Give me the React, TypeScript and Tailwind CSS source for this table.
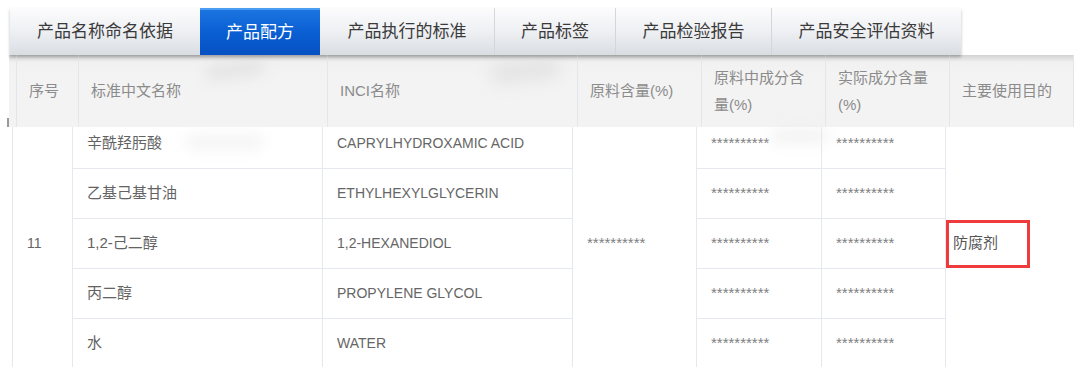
import React from "react";

const FONT = '"Liberation Sans", "Noto Sans CJK SC", Arial, sans-serif';

const tabs = [
  { label: "产品名称命名依据", w: "w-[190px]" },
  { label: "产品配方", w: "w-[120px]", active: true },
  { label: "产品执行的标准", w: "w-[174px]" },
  { label: "产品标签", w: "w-[121px]" },
  { label: "产品检验报告", w: "w-[156px]" },
  { label: "产品安全评估资料", w: "w-[190px]" },
];

const rows = [
  { cn: "辛酰羟肟酸", inci: "CAPRYLHYDROXAMIC ACID" },
  { cn: "乙基己基甘油", inci: "ETHYLHEXYLGLYCERIN" },
  { cn: "1,2-己二醇", inci: "1,2-HEXANEDIOL" },
  { cn: "丙二醇", inci: "PROPYLENE GLYCOL" },
  { cn: "水", inci: "WATER" },
];

const MASK = "**********";

function TabBar() {
  return (
    <div className="ml-[10px] mt-[8px] flex h-[47px] w-[951px] bg-gradient-to-b from-[#fcfcfd] via-[#eef0f3] to-[#d9dde2] shadow-[0_2px_3px_rgba(0,0,0,0.25)] relative z-10">
      {tabs.map((t, i) =>
        t.active ? (
          <div
            key={t.label}
            className={`${t.w} flex items-center justify-center text-[17px] text-white bg-gradient-to-b from-[#1b74e0] via-[#0a5fd3] to-[#0650c2] border-t-2 border-[#4a9cf0]`}
          >
            {t.label}
          </div>
        ) : (
          <div
            key={t.label}
            className={`${t.w} flex items-center justify-center text-[17px] text-[#3a3a3a] ${
              i > 0 && !tabs[i - 1].active ? "border-l border-[#d3d7dd]" : ""
            }`}
          >
            {t.label}
          </div>
        )
      )}
    </div>
  );
}

function HeaderRow() {
  const cell = "h-full border-l border-[#e4e6ee] pl-[12px] flex items-center text-[15px] text-[#8b8b8b]";
  return (
    <div className="ml-[9px] flex h-[72px] w-[1065px] bg-gradient-to-b from-[#d2d2d2] via-[#f1f1f1] to-[#f3f3f3] to-30% via-10%">
      <div className="w-[7px]" />
      <div className={`${cell} w-[62px]`}>序号</div>
      <div className={`${cell} w-[249px]`}>标准中文名称</div>
      <div className={`${cell} w-[250px]`}>INCI名称</div>
      <div className={`${cell} w-[124px]`}>原料含量(%)</div>
      <div className={`${cell} w-[124px] leading-[27px]`}>
        <span>
          原料中成分含
          <br />
          量(%)
        </span>
      </div>
      <div className={`${cell} w-[124px] leading-[27px]`}>
        <span>
          实际成分含量
          <br />
          (%)
        </span>
      </div>
      <div className={`${cell} w-[125px] border-r`}>主要使用目的</div>
    </div>
  );
}

function BodyTable() {
  const td = "border border-[#e6e8f0] pl-[14px] align-middle";
  const cnText = "text-[15px] text-[#636363]";
  const enText = "text-[14px] text-[#666666]";
  const star = "text-[15px] text-[#808080]";
  return (
    <div className="ml-[12px] h-[240px] w-[1058px] overflow-hidden">
      <table className="-mt-[9px] w-[1058px] table-fixed border-collapse">
        <colgroup>
          <col className="w-[60px]" />
          <col className="w-[250px]" />
          <col className="w-[250px]" />
          <col className="w-[124px]" />
          <col className="w-[125px]" />
          <col className="w-[124px]" />
          <col className="w-[125px]" />
        </colgroup>
        <tbody>
          {rows.map((r, i) => (
            <tr key={r.inci} className="h-[50px]">
              {i === 0 && (
                <td rowSpan={5} className={`${td} ${enText}`}>
                  11
                </td>
              )}
              <td className={`${td} ${cnText}`}>{r.cn}</td>
              <td className={`${td} ${enText}`}>{r.inci}</td>
              {i === 0 && (
                <td rowSpan={5} className={`${td} ${star}`}>
                  {MASK}
                </td>
              )}
              <td className={`${td} ${star}`}>{MASK}</td>
              <td className={`${td} ${star}`}>{MASK}</td>
              {i === 0 && (
                <td rowSpan={5} className="border border-[#e6e8f0] align-middle">
                  <div className="flex h-[48px] w-[84px] items-center border-[3px] border-[#ef3b3b] pl-[4px] text-[15px] text-[#555]">
                    防腐剂
                  </div>
                </td>
              )}
            </tr>
          ))}
        </tbody>
      </table>
    </div>
  );
}

export default function App() {
  return (
    <div className="relative h-[390px] w-[1080px] overflow-hidden bg-white" style={{ fontFamily: FONT }}>
      <TabBar />
      <HeaderRow />
      <BodyTable />
      {/* faint smudges over the grid */}
      <div className="pointer-events-none absolute left-[205px] top-[62px] h-[16px] w-[60px] rotate-[-8deg] rounded-full bg-[#d4d4d4] opacity-45 blur-[7px]" />
      <div className="pointer-events-none absolute left-[490px] top-[60px] h-[22px] w-[70px] rotate-[-6deg] rounded-full bg-[#d4d4d4] opacity-45 blur-[8px]" />
      <div className="pointer-events-none absolute left-[185px] top-[134px] h-[16px] w-[80px] rounded-full bg-[#eeeeee] opacity-60 blur-[7px]" />
      <div className="pointer-events-none absolute left-[770px] top-[128px] h-[16px] w-[60px] rounded-full bg-[#e8e8e8] opacity-50 blur-[7px]" />
      <div className="absolute left-[7px] top-[118px] h-[9px] w-[2px] bg-[#9a9a9a]" />
    </div>
  );
}
